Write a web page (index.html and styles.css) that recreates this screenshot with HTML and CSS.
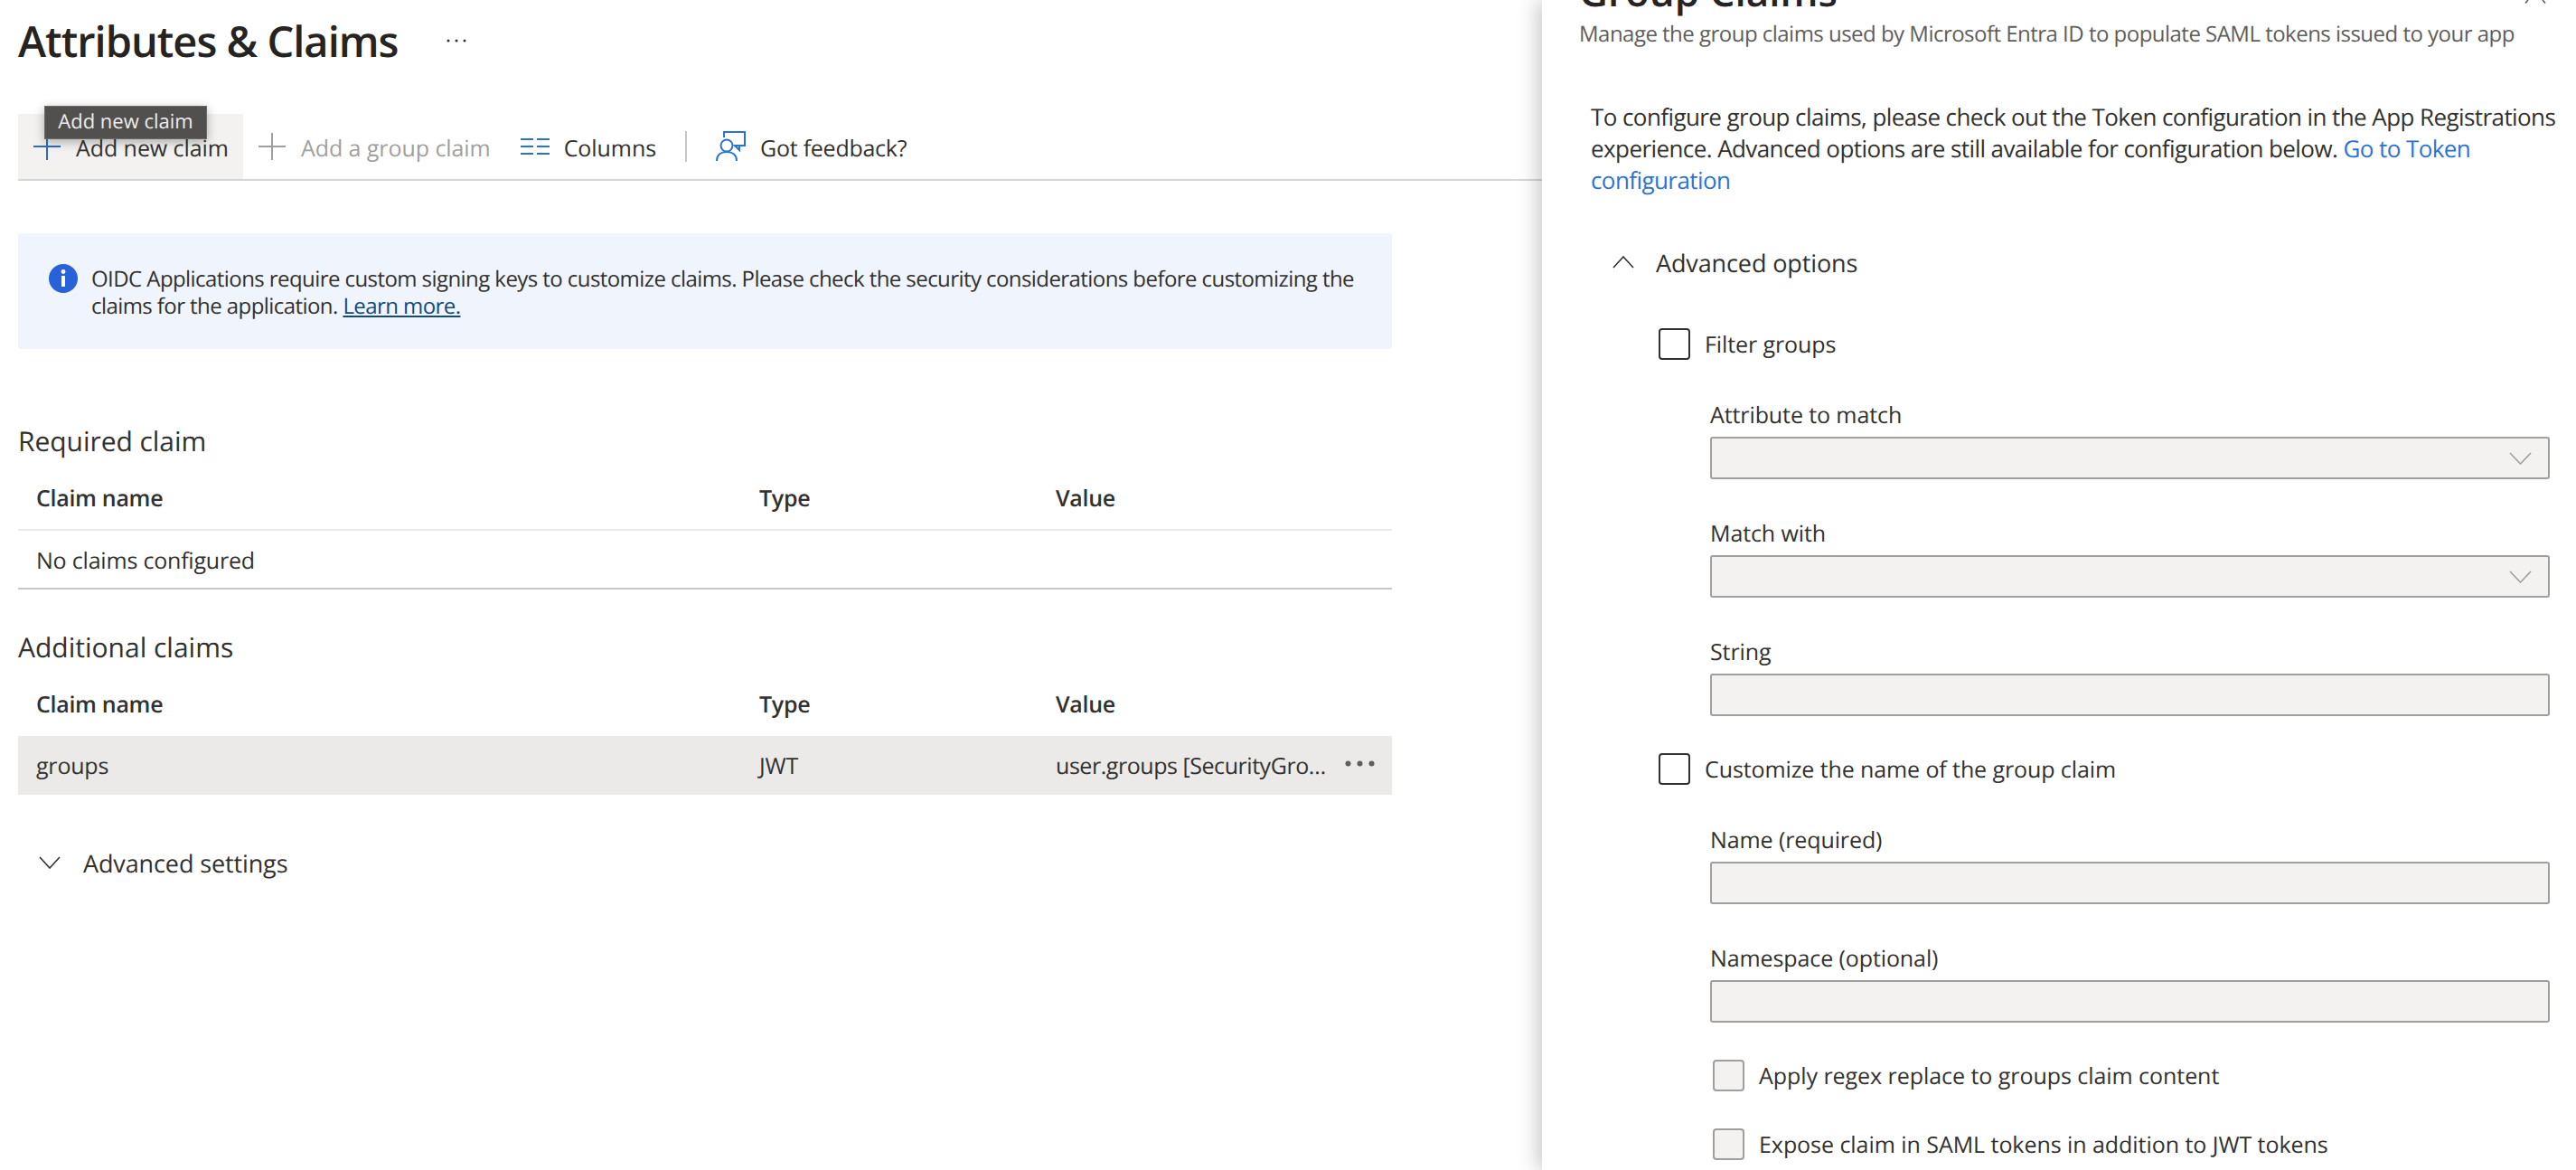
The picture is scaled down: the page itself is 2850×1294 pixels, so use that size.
FILE: index.html
```html
<!DOCTYPE html>
<html lang="en">
<head>
    <meta charset="UTF-8">
    <meta name="viewport" content="width=device-width, initial-scale=1.0">
    <title>Attributes &amp; Claims</title>
    <link rel="stylesheet" href="styles.css">
</head>
<body>
    <main class="page">
        <div class="title-row">
            <h1>Attributes &amp; Claims</h1>
            <svg class="title-more" width="22" height="4" viewBox="0 0 22 4"><circle cx="2" cy="2" r="1.5"/><circle cx="11" cy="2" r="1.5"/><circle cx="20" cy="2" r="1.5"/></svg>
        </div>

        <div class="toolbar">
            <div class="tool tool-active">
                <svg class="tool-plus" width="30" height="30" viewBox="0 0 30 30"><path d="M15 0V30M0 15H30" stroke="#2b6cc4" stroke-width="2" fill="none"/></svg>
                <span>Add new claim</span>
                <div class="tooltip">Add new claim</div>
            </div>
            <div class="tool tool-disabled">
                <svg class="tool-plus" width="30" height="30" viewBox="0 0 30 30"><path d="M15 0V30M0 15H30" stroke="#a19f9d" stroke-width="2" fill="none"/></svg>
                <span>Add a group claim</span>
            </div>
            <div class="tool tool-columns">
                <svg width="32" height="18" viewBox="0 0 32 18"><path d="M0 1H14M18 1H32M0 9H14M18 9H32M0 17H14M18 17H32" stroke="#2b73d2" stroke-width="2" fill="none"/></svg>
                <span>Columns</span>
            </div>
            <div class="tool-divider"></div>
            <div class="tool tool-feedback">
                <svg width="33" height="34" viewBox="0 0 33 34" fill="none" stroke="#2b73d2" stroke-width="2"><path d="M9 7V1H32V16H26"/><path d="M21 16L26 16V21Z"/><circle cx="12" cy="16" r="6.5"/><path d="M1 33C1 26 6 23 12 23C18 23 23 26 23 33"/></svg>
                <span>Got feedback?</span>
            </div>
        </div>

        <div class="notice">
            <svg class="notice-icon" width="32" height="32" viewBox="0 0 32 32"><circle cx="16" cy="16" r="16" fill="#2862d8"/><circle cx="16" cy="8.5" r="2.4" fill="#fff"/><rect x="14" y="13" width="4" height="12" fill="#fff"/></svg>
            <p>OIDC Applications require custom signing keys to customize claims. Please check the security considerations before customizing the claims for the application. <a class="notice-link" href="#">Learn more.</a></p>
        </div>

        <h2 class="section-title section-required">Required claim</h2>
        <div class="claim-row claim-head">
            <span>Claim name</span><span>Type</span><span>Value</span>
        </div>
        <div class="claim-row claim-empty">
            <span>No claims configured</span>
        </div>

        <h2 class="section-title section-additional">Additional claims</h2>
        <div class="claim-row claim-head claim-head-plain">
            <span>Claim name</span><span>Type</span><span>Value</span>
        </div>
        <div class="claim-row claim-selected">
            <span>groups</span><span>JWT</span>
            <span class="claim-value">
                <span>user.groups [SecurityGro…</span>
                <svg width="33" height="7" viewBox="0 0 33 7"><circle cx="3.5" cy="3.5" r="3"/><circle cx="16.5" cy="3.5" r="3"/><circle cx="29.5" cy="3.5" r="3"/></svg>
            </span>
        </div>

        <div class="advanced-settings">
            <svg width="24" height="14" viewBox="0 0 24 14"><path d="M1 1L12 13L23 1" fill="none" stroke="#323130" stroke-width="1.6"/></svg>
            <span>Advanced settings</span>
        </div>
    </main>

    <aside class="panel">
        <svg class="panel-close" width="26" height="4" viewBox="0 0 26 4"><path d="M5 0L2 3.5M21 0L24 3.5" stroke="#605e5c" stroke-width="1.6" fill="none"/></svg>
        <h2 class="panel-title">Group Claims</h2>
        <p class="panel-sub">Manage the group claims used by Microsoft Entra ID to populate SAML tokens issued to your app</p>
        <p class="panel-intro">To configure group claims, please check out the Token configuration in the App Registrations experience. Advanced options are still available for configuration below. <a class="panel-link" href="#">Go to Token configuration</a></p>

        <div class="advanced-options">
            <svg width="24" height="14" viewBox="0 0 24 14"><path d="M1 13L12 1L23 13" fill="none" stroke="#323130" stroke-width="1.6"/></svg>
            <span>Advanced options</span>
        </div>

        <div class="options">
            <label class="check check-filter"><span class="box"></span>Filter groups</label>

            <div class="field field-first">
                <div class="field-label">Attribute to match</div>
                <div class="input">
                    <svg width="25" height="14" viewBox="0 0 25 14"><path d="M1 1L12.5 13L24 1" fill="none" stroke="#a19f9d" stroke-width="1.6"/></svg>
                </div>
            </div>
            <div class="field">
                <div class="field-label">Match with</div>
                <div class="input">
                    <svg width="25" height="14" viewBox="0 0 25 14"><path d="M1 1L12.5 13L24 1" fill="none" stroke="#a19f9d" stroke-width="1.6"/></svg>
                </div>
            </div>
            <div class="field">
                <div class="field-label">String</div>
                <div class="input"></div>
            </div>

            <label class="check check-custom"><span class="box"></span>Customize the name of the group claim</label>

            <div class="field field-first">
                <div class="field-label">Name (required)</div>
                <div class="input"></div>
            </div>
            <div class="field">
                <div class="field-label">Namespace (optional)</div>
                <div class="input"></div>
            </div>

            <label class="check check-sub"><span class="box"></span>Apply regex replace to groups claim content</label>
            <label class="check check-sub"><span class="box"></span>Expose claim in SAML tokens in addition to JWT tokens</label>
        </div>
    </aside>
</body>
</html>
```

FILE: styles.css
```css
* {
    margin: 0;
    padding: 0;
    box-sizing: border-box;
}

html, body {
    height: 100%;
    overflow: hidden;
}

body {
    display: flex;
    background-color: #fff;
    color: #323130;
    font-family: 'Open Sans', 'Noto Sans', sans-serif;
    font-size: 25px;
    text-rendering: geometricPrecision;
}

a {
    text-decoration: none;
}

/* left blade */
.page {
    width: 1706px;
    flex-shrink: 0;
    padding-left: 20px;
}

.page > .notice,
.page > .claim-row {
    width: 1520px;
}

.title-row {
    display: flex;
    align-items: center;
    height: 90px;
}

h1 {
    font-size: 47px;
    font-weight: 600;
    letter-spacing: -1px;
    color: #252423;
}

.title-more {
    margin-left: 54px;
    fill: #323130;
}

.toolbar {
    display: flex;
    align-items: center;
    height: 74px;
    margin-top: 36px;
    border-bottom: 2px solid #d6d6d6;
}

.tool {
    position: relative;
    display: flex;
    align-items: center;
    height: 72px;
    letter-spacing: -0.07px;
}

.tool span {
    margin-left: 17px;
    padding-top: 3px;
}

.tool-active {
    width: 249px;
    padding-left: 17px;
    background-color: #f3f2f1;
}

.tool-disabled {
    margin-left: 17px;
    color: #a19f9d;
}

.tool-columns {
    margin-left: 33px;
}

.tool-columns span {
    margin-left: 16px;
}

.tool-divider {
    width: 2px;
    height: 34px;
    margin-left: 32px;
    background-color: #c8c6c4;
}

.tool-feedback {
    margin-left: 32px;
    letter-spacing: -0.25px;
}

.tool-feedback span {
    margin-left: 16px;
}

.tooltip {
    position: absolute;
    left: 29px;
    top: -9px;
    width: 180px;
    height: 37px;
    line-height: 33px;
    text-align: center;
    background-color: #51504e;
    border: 1px solid #6b6a68;
    color: #ececec;
    font-size: 22px;
    letter-spacing: 0;
    box-shadow: 0 3px 12px rgba(0, 0, 0, 0.3);
}

.notice {
    display: flex;
    align-items: flex-start;
    height: 128px;
    margin-top: 58px;
    padding: 34px 20px 0 34px;
    background-color: #f0f4fd;
    border-radius: 3px;
}

.notice-icon {
    flex-shrink: 0;
}

.notice p {
    margin-left: 15px;
    margin-top: 2px;
    font-size: 24px;
    line-height: 30px;
    letter-spacing: -0.57px;
}

.notice-link {
    color: #114a7d;
    text-decoration: underline;
}

.section-title {
    font-size: 30px;
    font-weight: 400;
    color: #323130;
    line-height: 40px;
}

.section-required {
    margin-top: 82px;
    letter-spacing: -0.05px;
}

.section-additional {
    margin-top: 44px;
}

.claim-row {
    display: grid;
    grid-template-columns: 800px 328px 1fr;
    align-items: center;
    padding-left: 20px;
    letter-spacing: -0.2px;
}

.claim-head {
    height: 79px;
    padding-top: 8px;
    font-weight: 600;
    letter-spacing: -0.3px;
    border-bottom: 2px solid #eaeaea;
}

.claim-head-plain {
    height: 78px;
    padding-top: 8px;
    border-bottom: none;
}

.claim-empty {
    height: 65px;
    padding-top: 2px;
    border-bottom: 2px solid #c8c8c8;
}

.claim-selected {
    height: 65px;
    background-color: #ebeae8;
}

.claim-value {
    display: flex;
    align-items: center;
    justify-content: space-between;
    padding-right: 19px;
    white-space: nowrap;
    letter-spacing: -0.45px;
}

.claim-value svg {
    flex-shrink: 0;
    margin-top: -4px;
    fill: #605e5c;
}

.advanced-settings {
    display: flex;
    align-items: center;
    margin-top: 57px;
    padding-left: 23px;
    height: 36px;
    font-size: 27px;
    letter-spacing: -0.12px;
}

.advanced-settings span {
    margin-left: 25px;
}

/* right panel */
.panel {
    position: relative;
    flex: 1;
    padding-left: 41px;
    background-color: #fff;
    box-shadow: -6px 0 20px rgba(0, 0, 0, 0.2);
}

.panel-close {
    position: absolute;
    left: 1086px;
    top: 0;
}

.panel-title {
    height: 20px;
    margin-top: -32px;
    font-size: 44px;
    font-weight: 600;
    line-height: 44px;
    white-space: nowrap;
    color: #252423;
}

.panel-sub {
    margin-top: 33px;
    color: #605e5c;
    font-size: 24px;
    line-height: 34px;
    white-space: nowrap;
    letter-spacing: -0.52px;
}

.panel-intro {
    width: 1090px;
    margin-top: 57px;
    margin-left: 13px;
    line-height: 35px;
    font-size: 26px;
    letter-spacing: -0.58px;
}

.panel-link {
    color: #2b73d2;
}

.advanced-options {
    display: flex;
    align-items: center;
    height: 36px;
    margin-top: 55px;
    margin-left: 37px;
    font-size: 27px;
    letter-spacing: -0.12px;
}

.advanced-options span {
    margin-left: 24px;
}

.options {
    margin-left: 88px;
    width: 986px;
    letter-spacing: -0.1px;
}

.check {
    display: flex;
    align-items: center;
}

.box {
    flex-shrink: 0;
    width: 35px;
    height: 35px;
    margin-right: 16px;
    border: 2px solid #323130;
    border-radius: 4px;
}

.check-filter {
    margin-top: 55px;
}

.check-custom {
    margin-top: 41px;
}

.check-sub {
    margin-top: 41px;
    margin-left: 60px;
    letter-spacing: -0.05px;
}

.check-sub .box {
    border-color: #a19f9d;
    background-color: #f3f2f1;
}

.field {
    margin-top: 43px;
    margin-left: 57px;
    width: 929px;
}

.field-first {
    margin-top: 44px;
}

.field-label {
    height: 34px;
    line-height: 34px;
    margin-bottom: 7px;
}

.input {
    display: flex;
    align-items: center;
    justify-content: flex-end;
    height: 47px;
    padding-right: 18px;
    background-color: #f3f2f1;
    border: 2px solid #a19f9d;
    border-radius: 3px;
}
```
